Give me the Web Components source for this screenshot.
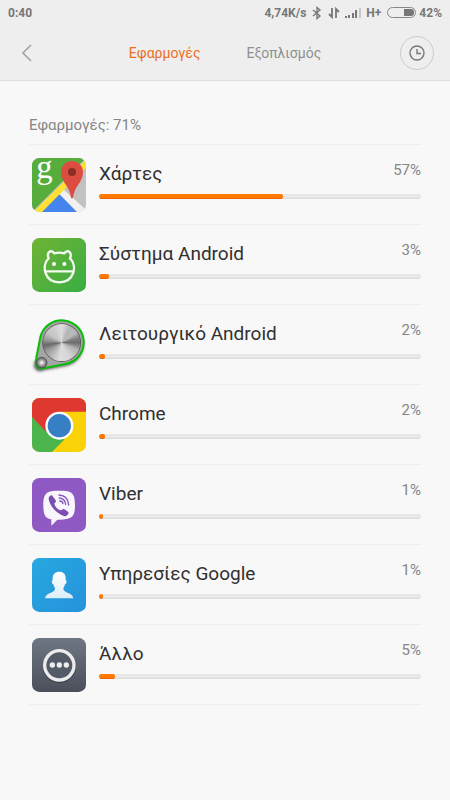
<!DOCTYPE html>
<html lang="el">
<head>
<meta charset="utf-8">
<meta name="viewport" content="width=device-width, initial-scale=1">
<title>Μπαταρία</title>
<style>
  body {
    margin: 0;
    min-height: 100vh;
    background: #f8f8f8;
    color: #303030;
    font-family: Roboto, "Noto Sans", sans-serif;
  }
</style>
</head>
<body>
<battery-page></battery-page>

<script>
const icons = {
  maps: `
    <defs><clipPath id="box"><rect width="162" height="162" rx="22"/></clipPath></defs>
    <g clip-path="url(#box)">
      <rect width="162" height="162" fill="#c2c2c2"/>
      <path d="M0 0H162L0 162Z" fill="#56ad3c"/>
      <path d="M80 106L20 166H138Z" fill="#4384ed"/>
      <path d="M80 106L92 92L162 155V162H136Z" fill="#f1f1f1"/>
      <path d="M4 162L162 5V29L30 162Z" fill="#ffe033"/>
      <path d="M120 122C116 122 116 108 111 97C104 80 87 68 87 42A33 33 0 0 1 153 42C153 68 136 80 129 97C124 108 124 122 120 122Z" fill="#dd4c41"/>
      <circle cx="120" cy="42" r="12" fill="#8c2e28"/>
      <text x="13" y="61" font-family="Liberation Serif, serif" font-size="98" fill="#fff">g</text>
    </g>`,
  android: `
    <defs><linearGradient id="bg" x2="1" y2="1"><stop stop-color="#70b436"/><stop offset="1" stop-color="#39ad43"/></linearGradient></defs>
    <rect width="162" height="162" rx="22" fill="url(#bg)"/>
    <path d="M50 61C42 44 58 32 67 46Q82 42 97 46C106 32 122 44 114 61C136 82 128 133 82 133C36 133 28 82 50 61ZM39 100H125" fill="none" stroke="#f4faf2" stroke-width="7" stroke-linejoin="round"/>
    <circle cx="66" cy="78" r="6" fill="#fff"/><circle cx="97" cy="78" r="6" fill="#fff"/>`,
  system: `
    <defs>
      <filter id="soft" x="-20%" y="-20%" width="140%" height="150%"><feGaussianBlur stdDeviation="5"/></filter>
      <radialGradient id="ball"><stop stop-color="#fff"/><stop offset=".5" stop-color="#aaa"/><stop offset="1" stop-color="#5a5a5a"/></radialGradient>
    </defs>
    <path d="M14 120L26 59A65 65 0 1 1 101 138L34 151A18 18 0 0 1 14 120Z" transform="translate(0 6)" fill="#222" opacity=".75" filter="url(#soft)"/>
    <path d="M12 126L25 58A66 66 0 1 1 100 138L36 151A20 20 0 0 1 12 126Z" fill="#a5a5a5" stroke="#08bd08" stroke-width="6"/>
    <circle cx="89" cy="74" r="58" fill="#555"/>
    <foreignObject x="33" y="18" width="112" height="112">
      <div style="width:112px;height:112px;border-radius:50%;background:conic-gradient(#ddd,#b4b4b4 30deg,#bbb 55deg,#808080 75deg,#6c6c6c 90deg,#b5b5b5 115deg,#d5d5d5 150deg,#ddd 185deg,#bbb 215deg,#9c9c9c 240deg,#686868 262deg,#999 280deg,#c5c5c5 305deg,#ccc 330deg,#ddd)"></div>
    </foreignObject>
    <circle cx="29" cy="134" r="16" fill="url(#ball)" stroke="#444" stroke-width="2"/>`,
  chrome: `
    <defs><clipPath id="box"><rect width="162" height="162" rx="22"/></clipPath></defs>
    <g clip-path="url(#box)">
      <rect width="162" height="162" fill="#f9d308"/>
      <path d="M0 0H162V41H82L50 112L0 58Z" fill="#df3831"/>
      <path d="M0 57L48 107L98 124L60 162H0Z" fill="#4cb44c"/>
      <circle cx="82" cy="83" r="42" fill="#fff"/>
      <circle cx="82" cy="83" r="35" fill="#377fc5"/>
    </g>`,
  viber: `
    <rect width="162" height="162" rx="22" fill="#8f59c4"/>
    <path d="M82 38C120 38 129 44 129 81C129 117 120 124 82 125H76L58 143V124C40 121 34 112 34 81C34 44 44 38 82 38Z" fill="#f8f5fc"/>
    <path d="M60 52C56 50 49 57 50 63C54 86 75 108 98 115C104 116 112 107 109 102L96 93C92 91 89 98 85 97C77 94 69 86 67 78C67 74 74 72 71 67Z" fill="#7c4db2"/>
    <path d="M81 51C98 52 109 63 110 81M82 60C94 61 100 68 101 79M83 69C89 69 92 72 93 77" fill="none" stroke="#8455b8" stroke-width="4" stroke-linecap="round"/>`,
  google: `
    <defs>
      <linearGradient id="bg" x2="1" y2="1"><stop stop-color="#27a8df"/><stop offset="1" stop-color="#2592dc"/></linearGradient>
      <linearGradient id="fg" x2="0" y2="1"><stop stop-color="#fff"/><stop offset="1" stop-color="#dceef9"/></linearGradient>
    </defs>
    <rect width="162" height="162" rx="22" fill="url(#bg)"/>
    <path d="M82 41C94 41 101 48 101 60V67C106 68 104 77 99 79C97 87 94 89 94 92C94 106 122 102 124 121H39C41 102 69 106 69 92C69 89 66 87 64 79C59 77 58 68 62 67V60C62 48 70 41 82 41Z" fill="url(#fg)"/>`,
  other: `
    <defs><linearGradient id="bg" x2="0" y2="1"><stop stop-color="#6d7783"/><stop offset="1" stop-color="#4b4f5a"/></linearGradient></defs>
    <rect width="162" height="162" rx="22" fill="url(#bg)"/>
    <circle cx="82" cy="86" r="45" fill="#444b56" stroke="#3c424c" stroke-width="9"/>
    <circle cx="82" cy="82" r="44" fill="#535b68" stroke="#ececec" stroke-width="10"/>
    <g fill="#ededed"><circle cx="61" cy="81" r="8"/><circle cx="82" cy="81" r="8"/><circle cx="103" cy="81" r="8"/></g>`
};

class StatusBar extends HTMLElement {
  constructor() {
    super();
    this.attachShadow({ mode: 'open' }).innerHTML = `
    <style>
    :host {
      display: flex;
      align-items: center;
      justify-content: space-between;
      height: 26px;
      padding: 0 8px;
      color: #777;
      font-size: 12px;
      font-weight: 700;
    }
    .right {
      display: flex;
      align-items: center;
      gap: 5px;
    }
    svg { display: block; }
    .power { display: flex; align-items: center; gap: 3px; }
    </style>
    <span>0:40</span>
    <div class="right">
      <span>4,74K/s</span>
      <svg width="12" height="14" viewBox="0 0 12 14" fill="none" stroke="#777" stroke-width="1.4"><path d="M2 4L9 10L6 12.500V1.500L9 4L2 10"/></svg>
      <svg width="12" height="14" viewBox="0 0 12 14" fill="none" stroke="#777" stroke-width="1.8"><path d="M4 2V11L1 8M8 12V3L11 6"/></svg>
      <svg width="16" height="12" viewBox="0 0 16 12" fill="#777"><path d="M0 9h2v2H0zM3 8h2v3H3zM7 6h2v5H7zM10 3h2v8h-2z"/><path d="M14 1h2v10h-2z" fill="#c8c8c8"/></svg>
      <span>H+</span>
      <div class="power">
        <svg width="30" height="12" viewBox="0 0 30 12"><rect x="1.500" y=".5" width="28" height="10" rx="5" fill="none" stroke="#888"/><path d="M18 2h7q3 0 3 3v1q0 3-3 3h-7z" fill="#777"/></svg>
        <span>42%</span>
      </div>
    </div>`;
  }
}

class TabHeader extends HTMLElement {
  constructor() {
    super();
    this.attachShadow({ mode: 'open' }).innerHTML = `
    <style>
    :host {
      display: grid;
      grid-template-columns: 1fr auto 1fr;
      align-items: center;
      height: 54px;
      padding: 0 16px;
      border-bottom: 1px solid #dedede;
    }
    button {
      display: flex;
      align-items: center;
      justify-content: center;
      margin: 0;
      padding: 0;
      border: 0;
      background: none;
      color: #8f8f8f;
      font: inherit;
      font-size: 14px;
    }
    .back { width: 22px; height: 34px; }
    nav { display: flex; gap: 46px; }
    .active { color: #ed6d1f; }
    .history {
      justify-self: end;
      width: 34px;
      height: 34px;
      border: 1px solid #cbcbcb;
      border-radius: 50%;
    }
    </style>
    <button class="back" aria-label="Πίσω">
      <svg width="12" height="18" viewBox="0 0 12 18" fill="none" stroke="#a2a2a2" stroke-width="1.6"><path d="M10 1L2 9L10 17"/></svg>
    </button>
    <nav>
      <button class="active">Εφαρμογές</button>
      <button>Εξοπλισμός</button>
    </nav>
    <button class="history" aria-label="Ιστορικό">
      <svg width="16" height="16" viewBox="0 0 16 16" fill="none" stroke="#777" stroke-width="1.4"><circle cx="8" cy="8" r="7"/><path d="M8 4V8.500H12"/></svg>
    </button>`;
  }
}

class UsageItem extends HTMLElement {
  connectedCallback() {
    const name = this.getAttribute('name');
    const value = this.getAttribute('value');
    this.attachShadow({ mode: 'open' }).innerHTML = `
    <style>
    :host {
      display: flex;
      align-items: flex-start;
      gap: 13px;
      box-sizing: border-box;
      height: 80px;
      padding: 13px 0 0 3px;
      border-bottom: 1px solid #eee;
    }
    .icon {
      flex: none;
      display: block;
      width: 54px;
      height: 54px;
      overflow: visible;
    }
    .info { flex: 1; }
    .text {
      display: flex;
      justify-content: space-between;
      height: 36px;
    }
    .name {
      font-size: 19px;
      line-height: 32px;
    }
    .value {
      color: #868686;
      font-size: 15px;
      line-height: 24px;
    }
    .track {
      height: 5px;
      border-radius: 2px;
      background: linear-gradient(#e8e8e8 80%, #dadada 80%);
      overflow: hidden;
    }
    .fill {
      width: ${value}%;
      min-width: 4px;
      height: 100%;
      border-radius: 2px;
      background: linear-gradient(#ff7800 80%, #e86400 80%);
    }
    </style>
    <svg class="icon" viewBox="0 0 162 162" aria-hidden="true">${icons[this.getAttribute('icon')]}</svg>
    <div class="info">
      <div class="text">
        <span class="name">${name}</span>
        <span class="value">${value}%</span>
      </div>
      <div class="track" role="progressbar" aria-label="${name}" aria-valuenow="${value}">
        <div class="fill"></div>
      </div>
    </div>`;
  }
}

class UsageList extends HTMLElement {
  constructor() {
    super();
    this.attachShadow({ mode: 'open' }).innerHTML = `
    <style>
    :host {
      display: block;
      padding: 32px 29px;
    }
    .caption {
      padding-bottom: 7px;
      border-bottom: 1px solid #eee;
      color: #868686;
      font-size: 15px;
      line-height: 24px;
    }
    </style>
    <div class="caption"><slot name="caption"></slot></div>
    <slot></slot>`;
  }
}

class BatteryPage extends HTMLElement {
  constructor() {
    super();
    this.attachShadow({ mode: 'open' }).innerHTML = `
    <style>
    :host { display: block; }
    header { background: #eee; }
    </style>
    <header>
      <status-bar></status-bar>
      <tab-header></tab-header>
    </header>
    <main>
      <usage-list>
        <span slot="caption">Εφαρμογές: 71%</span>
        <usage-item icon="maps" name="Χάρτες" value="57"></usage-item>
        <usage-item icon="android" name="Σύστημα Android" value="3"></usage-item>
        <usage-item icon="system" name="Λειτουργικό Android" value="2"></usage-item>
        <usage-item icon="chrome" name="Chrome" value="2"></usage-item>
        <usage-item icon="viber" name="Viber" value="1"></usage-item>
        <usage-item icon="google" name="Υπηρεσίες Google" value="1"></usage-item>
        <usage-item icon="other" name="Άλλο" value="5"></usage-item>
      </usage-list>
    </main>`;
  }
}

customElements.define('status-bar', StatusBar);
customElements.define('tab-header', TabHeader);
customElements.define('usage-item', UsageItem);
customElements.define('usage-list', UsageList);
customElements.define('battery-page', BatteryPage);
</script>
</body>
</html>
